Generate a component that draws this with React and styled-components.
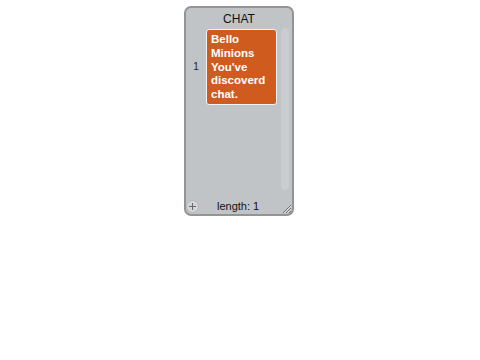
import React from "react";
import styled, { createGlobalStyle } from "styled-components";

const Global = createGlobalStyle`
  html, body { margin: 0; padding: 0; background: #fff; }
  body { font-family: "Liberation Sans", Arial, sans-serif; }
`;

const Page = styled.div`
  width: 480px;
  height: 360px;
  padding: 6px 0 0 184px;
  box-sizing: border-box;
`;

const Watcher = styled.div`
  position: relative;
  width: 110px;
  height: 210px;
  box-sizing: border-box;
  border: 2px solid #949494;
  border-radius: 7px;
  background: #c1c4c7;
  display: flex;
  flex-direction: column;
  overflow: hidden;
`;

const Title = styled.div`
  height: 20px;
  line-height: 22px;
  text-align: center;
  font-size: 12px;
  color: #111;
`;

const Body = styled.div`
  flex: 1;
  display: flex;
  min-height: 0;
`;

const Rows = styled.div`
  flex: 1;
  display: flex;
  flex-direction: column;
`;

const Row = styled.div`
  display: flex;
  align-items: center;
  padding-top: 1px;
`;

const Index = styled.div`
  width: 20px;
  text-align: center;
  font-size: 10px;
  color: #222;
`;

const Item = styled.div`
  width: 71px;
  box-sizing: border-box;
  border: 1px solid #f4f4f4;
  border-radius: 3px;
  background: #d05b1f;
  color: #fff;
  font-weight: bold;
  font-size: 11.5px;
  line-height: 13.75px;
  padding: 3px 2px 2px 4px;
  word-break: break-word;
`;

const Scrollbar = styled.div`
  width: 9px;
  margin: 0 3px 6px 4px;
  background: #cacdcf;
  border-radius: 4px;
  height: 162px;
`;

const Footer = styled.div`
  height: 18px;
  display: flex;
  align-items: center;
  position: relative;
  font-size: 11px;
  color: #111;
`;

const AddButton = styled.div`
  width: 13px;
  height: 13px;
  margin-left: 0px;
  margin-top: 2px;
  border-radius: 50%;
  background: #d3d5d7;
  border: 1px solid #b4b6b8;
  box-sizing: border-box;
  display: flex;
  align-items: center;
  justify-content: center;
`;

const Length = styled.div`
  margin-left: 18px;
  margin-top: 2px;
`;

const Resize = styled.svg`
  position: absolute;
  right: 0;
  bottom: 0;
`;

export default function App() {
  return (
    <>
      <Global />
      <Page>
        <Watcher>
          <Title>CHAT</Title>
          <Body>
            <Rows>
              <Row>
                <Index>1</Index>
                <Item>Bello Minions You've discoverd chat.</Item>
              </Row>
            </Rows>
            <Scrollbar />
          </Body>
          <Footer>
            <AddButton>
              <svg width="9" height="9" viewBox="0 0 9 9">
                <path d="M4.5 1v7M1 4.5h7" stroke="#666" strokeWidth="1" />
              </svg>
            </AddButton>
            <Length>length: 1</Length>
            <Resize width="12" height="12" viewBox="0 0 12 12">
              <path d="M3 11L11 3M6 11L11 6M9 11L11 9" stroke="#6f6f6f" strokeWidth="1" />
              <path d="M4 11L11 4M7 11L11 7" stroke="#e8e8e8" strokeWidth="0.8" />
            </Resize>
          </Footer>
        </Watcher>
      </Page>
    </>
  );
}
